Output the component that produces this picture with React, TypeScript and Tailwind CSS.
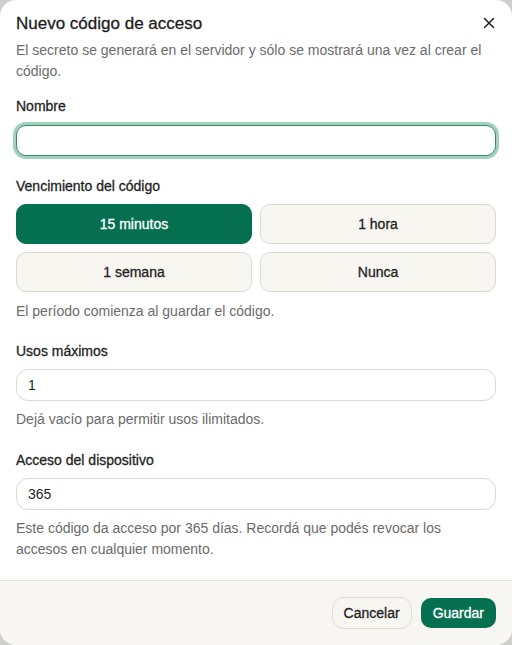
import { useState } from "react";

const OPTIONS = ["15 minutos", "1 hora", "1 semana", "Nunca"];

// Liberation Sans has no 500 weight, so a thin stroke stands in for "medium"
const medium = "font-medium [-webkit-text-stroke:0.3px]";

export default function App() {
  const [expiry, setExpiry] = useState("15 minutos");

  return (
    <div
      className="h-[645px] w-[512px] bg-[#cfcfcf]"
      style={{ fontFamily: "'Liberation Sans', Arial, sans-serif" }}
    >
      <div className="flex h-full w-full flex-col overflow-hidden rounded-2xl bg-white">
        <div className="flex-1 px-4 pt-[14px]">
          <div className="flex items-start justify-between">
            <h2 className={`text-[17px] leading-5 text-[#1c1c1c] ${medium}`}>
              Nuevo código de acceso
            </h2>
            <button className="mr-[1px] mt-[3px] text-[#1c1c1c]">
              <svg width="12" height="12" viewBox="0 0 12 12" fill="none" stroke="currentColor" strokeWidth="1.5" strokeLinecap="round">
                <path d="M1.5 1.5l9 9M10.5 1.5l-9 9" />
              </svg>
            </button>
          </div>
          <p className="mt-[6px] text-sm leading-[21px] text-[#6b6b6b]">
            El secreto se generará en el servidor y sólo se mostrará una vez al crear el código.
          </p>

          <div className="mt-[14px]">
            <label className={`block text-sm leading-5 text-[#1f1f1f] ${medium}`}>Nombre</label>
            <input
              className="mt-[9px] block h-[31px] w-full rounded-[10px] border border-[#3b8a6a] bg-white px-[11px] text-sm outline-none ring-[3px] ring-[#9fd3bd]"
            />
          </div>

          <div className="mt-[20px]">
            <label className={`block text-sm leading-5 text-[#1f1f1f] ${medium}`}>
              Vencimiento del código
            </label>
            <div className="mt-2 grid grid-cols-2 gap-2">
              {OPTIONS.map((o) => (
                <button
                  key={o}
                  onClick={() => setExpiry(o)}
                  className={
                    expiry === o
                      ? `h-10 rounded-[10px] border border-[#047050] bg-[#047050] text-sm text-white ${medium}`
                      : `h-10 rounded-[10px] border border-[#dedad1] bg-[#f8f6f0] text-sm text-[#1f1f1f] ${medium}`
                  }
                >
                  {o}
                </button>
              ))}
            </div>
            <p className="mt-[9px] text-sm leading-5 text-[#6b6b6b]">
              El período comienza al guardar el código.
            </p>
          </div>

          <div className="mt-5">
            <label className={`block text-sm leading-5 text-[#1f1f1f] ${medium}`}>Usos máximos</label>
            <input
              defaultValue="1"
              className="mt-2 block h-8 w-full rounded-xl border border-[#dcdad4] bg-white px-[11px] text-sm text-[#1f1f1f] outline-none"
            />
            <p className="mt-2 text-sm leading-5 text-[#6b6b6b]">Dejá vacío para permitir usos ilimitados.</p>
          </div>

          <div className="mt-[21px]">
            <label className={`block text-sm leading-5 text-[#1f1f1f] ${medium}`}>
              Acceso del dispositivo
            </label>
            <input
              defaultValue="365"
              className="mt-2 block h-8 w-full rounded-xl border border-[#dcdad4] bg-white px-[11px] text-sm text-[#1f1f1f] outline-none"
            />
            <p className="mt-2 text-sm leading-[21px] text-[#6b6b6b]">
              Este código da acceso por 365 días. Recordá que podés revocar los accesos en cualquier momento.
            </p>
          </div>
        </div>

        <div className="flex h-[65px] items-center justify-end gap-[9px] border-t border-[#e3e0da] bg-[#f7f6f2] px-4">
          <button className={`h-8 rounded-xl border border-[#e0ddd5] bg-[#f8f6f1] px-[11px] text-sm text-[#1f1f1f] ${medium}`}>
            Cancelar
          </button>
          <button className={`h-[30px] rounded-[10px] bg-[#047050] px-3 text-sm text-white ${medium}`}>
            Guardar
          </button>
        </div>
      </div>
    </div>
  );
}
